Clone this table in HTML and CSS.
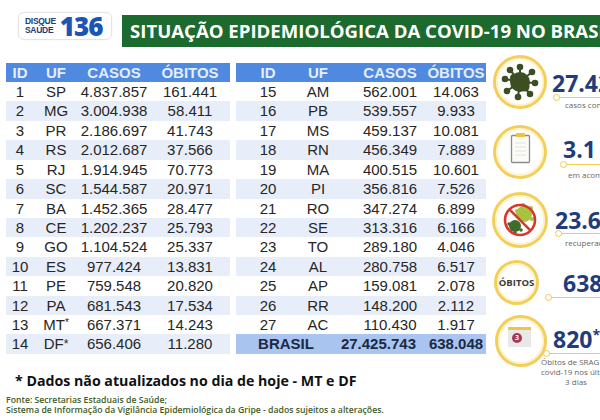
FILE: index.html
```html
<!DOCTYPE html>
<html lang="pt-BR">
<head>
<meta charset="utf-8">
<title>Situação epidemiológica da COVID-19 no Brasil</title>
<link rel="stylesheet" href="styles.css">
</head>
<body>
<div class="page">
  <header class="top">
    <div class="logo">
      <div class="logo-words"><span>DISQUE</span><span>SAÚDE</span></div>
      <div class="logo-num">136</div>
    </div>
    <h1 class="banner">SITUAÇÃO EPIDEMIOLÓGICA DA COVID-19 NO BRASIL</h1>
  </header>

  <main class="content">
    <section class="left">
      <div class="tables">
        <div class="tbl tbl-a">
          <div class="row head"><span>ID</span><span>UF</span><span>CASOS</span><span>ÓBITOS</span></div>
          <div class="row"><span>1</span><span>SP</span><span>4.837.857</span><span>161.441</span></div>
          <div class="row"><span>2</span><span>MG</span><span>3.004.938</span><span>58.411</span></div>
          <div class="row"><span>3</span><span>PR</span><span>2.186.697</span><span>41.743</span></div>
          <div class="row"><span>4</span><span>RS</span><span>2.012.687</span><span>37.566</span></div>
          <div class="row"><span>5</span><span>RJ</span><span>1.914.945</span><span>70.773</span></div>
          <div class="row"><span>6</span><span>SC</span><span>1.544.587</span><span>20.971</span></div>
          <div class="row"><span>7</span><span>BA</span><span>1.452.365</span><span>28.477</span></div>
          <div class="row"><span>8</span><span>CE</span><span>1.202.237</span><span>25.793</span></div>
          <div class="row"><span>9</span><span>GO</span><span>1.104.524</span><span>25.337</span></div>
          <div class="row"><span>10</span><span>ES</span><span>977.424</span><span>13.831</span></div>
          <div class="row"><span>11</span><span>PE</span><span>759.548</span><span>20.820</span></div>
          <div class="row"><span>12</span><span>PA</span><span>681.543</span><span>17.534</span></div>
          <div class="row"><span>13</span><span>MT<sup class="ast">*</sup></span><span>667.371</span><span>14.243</span></div>
          <div class="row"><span>14</span><span>DF<span class="ast2">*</span></span><span>656.406</span><span>11.280</span></div>
        </div>
        <div class="tbl tbl-b">
          <div class="row head"><span>ID</span><span class="uf">UF</span><span>CASOS</span><span>ÓBITOS</span></div>
          <div class="row"><span>15</span><span class="uf">AM</span><span>562.001</span><span>14.063</span></div>
          <div class="row"><span>16</span><span class="uf">PB</span><span>539.557</span><span>9.933</span></div>
          <div class="row"><span>17</span><span class="uf">MS</span><span>459.137</span><span>10.081</span></div>
          <div class="row"><span>18</span><span class="uf">RN</span><span>456.349</span><span>7.889</span></div>
          <div class="row"><span>19</span><span class="uf">MA</span><span>400.515</span><span>10.601</span></div>
          <div class="row"><span>20</span><span class="uf">PI</span><span>356.816</span><span>7.526</span></div>
          <div class="row"><span>21</span><span class="uf">RO</span><span>347.274</span><span>6.899</span></div>
          <div class="row"><span>22</span><span class="uf">SE</span><span>313.316</span><span>6.166</span></div>
          <div class="row"><span>23</span><span class="uf">TO</span><span>289.180</span><span>4.046</span></div>
          <div class="row"><span>24</span><span class="uf">AL</span><span>280.758</span><span>6.517</span></div>
          <div class="row"><span>25</span><span class="uf">AP</span><span>159.081</span><span>2.078</span></div>
          <div class="row"><span>26</span><span class="uf">RR</span><span>148.200</span><span>2.112</span></div>
          <div class="row"><span>27</span><span class="uf">AC</span><span>110.430</span><span>1.917</span></div>
          <div class="row total"><span class="br">BRASIL</span><span class="tc">27.425.743</span><span class="to">638.048</span></div>
        </div>
      </div>
      <p class="note">* Dados não atualizados no dia de hoje - MT e DF</p>
      <p class="source"><span class="src-line">Fonte: Secretarias Estaduais de Saúde;</span><span class="src-line">Sistema de Informação da Vigilância Epidemiológica da Gripe - dados sujeitos a alterações.</span></p>
    </section>

    <aside class="stats">
      <div class="stat s1">
        <div class="ring">
          <svg viewBox="0 0 48 48" width="48" height="48">
            <g stroke="#3c4f22" stroke-width="2" fill="#3c4f22">
              <line x1="24" y1="24" x2="24" y2="9"/>
              <line x1="24" y1="24" x2="36" y2="14"/>
              <line x1="24" y1="24" x2="39" y2="25"/>
              <line x1="24" y1="24" x2="34" y2="36"/>
              <line x1="24" y1="24" x2="22" y2="39"/>
              <line x1="24" y1="24" x2="11" y2="33"/>
              <line x1="24" y1="24" x2="9" y2="21"/>
              <line x1="24" y1="24" x2="14" y2="12"/>
              <circle cx="24" cy="9" r="2.3"/>
              <circle cx="36" cy="14" r="2.3"/>
              <circle cx="39" cy="25" r="2.3"/>
              <circle cx="34" cy="36" r="2.3"/>
              <circle cx="22" cy="39" r="2.3"/>
              <circle cx="11" cy="33" r="2.3"/>
              <circle cx="9" cy="21" r="2.3"/>
              <circle cx="14" cy="12" r="2.3"/>
            </g>
            <circle cx="24" cy="24" r="10" fill="#3c4f22"/>
            <circle cx="18" cy="20" r="4" fill="#3c4f22"/>
            <circle cx="29" cy="29" r="4.5" fill="#3c4f22"/>
          </svg>
        </div>
        <div class="body">
          <div class="num">27.425.743</div>
          <div class="rule"></div>
          <div class="cap">casos confirmados</div>
        </div>
      </div>

      <div class="stat s2">
        <div class="ring">
          <svg viewBox="0 0 48 48" width="48" height="48">
            <rect x="15.5" y="7.5" width="18" height="27" rx="1" fill="#fbfbf8" stroke="#8c8c8c" stroke-width="1.3"/>
            <rect x="20" y="5" width="9" height="4" rx="1" fill="#f0c23c"/>
            <g stroke="#e2e2e2" stroke-width="1">
              <line x1="19" y1="15" x2="30" y2="15"/>
              <line x1="19" y1="19" x2="30" y2="19"/>
              <line x1="19" y1="23" x2="30" y2="23"/>
              <line x1="19" y1="27" x2="30" y2="27"/>
            </g>
          </svg>
        </div>
        <div class="body">
          <div class="num">3.1</div>
          <div class="rule"></div>
          <div class="cap">em acompanhamento</div>
        </div>
      </div>

      <div class="stat s3">
        <div class="ring">
          <svg viewBox="0 0 50 50" width="50" height="50">
            <circle cx="29" cy="19" r="8" fill="#a7c43e"/>
            <circle cx="22" cy="16" r="2" fill="#a7c43e"/>
            <circle cx="36" cy="13" r="2" fill="#a7c43e"/>
            <circle cx="37" cy="24" r="2" fill="#a7c43e"/>
            <circle cx="28" cy="10" r="2" fill="#a7c43e"/>
            <circle cx="20" cy="31" r="6" fill="#3f6b2b"/>
            <circle cx="14" cy="29" r="1.8" fill="#3f6b2b"/>
            <circle cx="26" cy="35" r="1.8" fill="#3f6b2b"/>
            <circle cx="20" cy="38" r="1.8" fill="#3f6b2b"/>
            <circle cx="25" cy="25" r="15" fill="none" stroke="#d6392b" stroke-width="2.6"/>
            <line x1="14.4" y1="14.4" x2="35.6" y2="35.6" stroke="#d6392b" stroke-width="2.6"/>
          </svg>
        </div>
        <div class="body">
          <div class="num">23.6</div>
          <div class="rule"></div>
          <div class="cap">recuperados</div>
        </div>
      </div>

      <div class="stat s4">
        <div class="ring"><span class="ring-word">ÓBITOS</span></div>
        <div class="body">
          <div class="num">638.048</div>
          <div class="rule"></div>
        </div>
      </div>

      <div class="stat s5">
        <div class="ring">
          <svg viewBox="0 0 46 46" width="46" height="46">
            <rect x="10" y="9" width="23" height="20" fill="#e8e8e6"/>
            <rect x="10" y="9" width="23" height="3" fill="#f0c24a"/>
            <circle cx="19" cy="20" r="5" fill="#a8365e"/>
            <text x="19" y="22.3" text-anchor="middle" class="cal-num">3</text>
          </svg>
        </div>
        <div class="body">
          <div class="num">820<sup class="num-ast">*</sup></div>
          <div class="rule"></div>
          <div class="cap">Óbitos de SRAG por<br>covid-19 nos últimos<br>3 dias</div>
        </div>
      </div>
    </aside>
  </main>
</div>
</body>
</html>
```
FILE: styles.css
```css
html, body {
  margin: 0;
  padding: 0;
  background: #ffffff;
}
body {
  width: 600px;
  height: 420px;
  overflow: hidden;
  font-family: "Liberation Sans", Arial, sans-serif;
  color: #262626;
}
.page {
  width: 600px;
  height: 420px;
  overflow: hidden;
}

/* header */
.top {
  display: flex;
  align-items: flex-start;
  padding: 12px 0 0 18px;
  height: 35px;
}
.logo {
  box-sizing: border-box;
  width: 94px;
  height: 28px;
  border: 1px solid #e4e4e4;
  border-radius: 6px;
  box-shadow: 0 0 2px rgba(0,0,0,0.08);
  display: flex;
  align-items: center;
  padding-left: 6px;
  gap: 4px;
}
.logo-words {
  display: flex;
  flex-direction: column;
  font-weight: 700;
  font-size: 8.5px;
  line-height: 9px;
  color: #1e3c74;
  letter-spacing: -0.3px;
}
.logo-num {
  font-family: "Open Sans", "Liberation Sans", sans-serif;
  font-weight: 800;
  font-size: 26px;
  line-height: 26px;
  color: #1c55b5;
  letter-spacing: -1px;
}
.banner {
  flex: 1;
  margin: 3px 0 0 10px;
  height: 32px;
  background: #1c6a2d;
  color: #ffffff;
  font-family: "Open Sans", "Noto Sans", sans-serif;
  font-weight: 700;
  font-size: 18.6px;
  line-height: 32px;
  padding-left: 8px;
  white-space: nowrap;
  overflow: hidden;
}

/* content */
.content {
  display: flex;
  align-items: flex-start;
}
.left {
  width: 480px;
  padding-left: 6px;
  flex: none;
}
.tables {
  display: flex;
  gap: 6px;
  margin-top: 16px;
}
.tbl {
  display: flex;
  flex-direction: column;
}
.tbl-a { width: 224px; }
.tbl-b { width: 250px; }
.row {
  display: grid;
  height: 19.43px;
  font-size: 15px;
  line-height: 19.43px;
  text-align: center;
  white-space: nowrap;
}
.tbl-a .row { grid-template-columns: 28px 44px 72px 80px; }
.tbl-b .row { grid-template-columns: 64px 54px 72px 60px; }
.uf { padding-right: 18px; }
.row:nth-child(odd) { background: #e8eef9; }
.row.head {
  height: 19px;
  line-height: 19px;
  background: #4f89e0;
  color: #e4edfc;
  font-weight: 700;
}
.ast {
  font-size: 10px;
  vertical-align: 4px;
  line-height: 0;
}
.ast2 {
  font-size: 12px;
  position: relative;
  top: -1px;
}
.tbl-b .row.total {
  background: #a9c5ef;
  color: #1b2a44;
  font-weight: 700;
  grid-template-columns: 100px 90px 60px;
}
.tc { text-align: right; padding-right: 10px; }
.to { text-align: center; }

.note {
  margin: 17px 0 0 9px;
  font-family: "Open Sans", "Noto Sans", sans-serif;
  font-weight: 700;
  font-size: 14.2px;
  line-height: 20px;
  color: #111111;
  white-space: nowrap;
}
.source {
  margin: 4px 0 0 0;
  font-family: "Open Sans", "Noto Sans", sans-serif;
  font-weight: 600;
  font-size: 8.7px;
  color: #3f5b1e;
  white-space: nowrap;
}
.src-line {
  display: block;
  height: 10.5px;
  line-height: 10.5px;
}

/* stats */
.stats {
  flex: 1;
  min-width: 0;
  padding-top: 8px;
  margin-left: 6px;
  overflow: hidden;
}
.stat {
  display: flex;
  align-items: flex-start;
}
.ring {
  flex: none;
  box-sizing: border-box;
  border-radius: 50%;
  border: 3px solid #f3cf5a;
  box-shadow: inset 0 0 0 2px #fdf3cf;
  background: #ffffff;
  display: flex;
  align-items: center;
  justify-content: center;
}
.ring svg { display: block; }
.body {
  flex: 1;
  min-width: 0;
  white-space: nowrap;
}
.num {
  font-family: "Open Sans", "Noto Sans", sans-serif;
  font-weight: 700;
  font-size: 23px;
  line-height: 24px;
  color: #1f3d7a;
}
.num-ast {
  font-size: 14px;
  line-height: 0;
  vertical-align: 8px;
}
.rule {
  position: relative;
  height: 7px;
  width: 120px;
}
.rule::before {
  content: "";
  position: absolute;
  left: 3px;
  right: 0;
  top: 2.75px;
  height: 1.5px;
  background: #f0c94e;
}
.rule::after {
  content: "";
  position: absolute;
  left: 0;
  top: 0;
  box-sizing: border-box;
  width: 7px;
  height: 7px;
  border-radius: 50%;
  border: 1.5px solid #f0c94e;
  background: #ffffff;
}
.cap {
  font-family: "Open Sans", "Noto Sans", sans-serif;
  font-size: 8px;
  line-height: 10px;
  color: #666666;
}
.ring-word {
  font-family: "Open Sans", "Noto Sans", sans-serif;
  font-weight: 700;
  font-size: 9.5px;
  color: #3a3a3a;
}
.cal-num {
  font-family: "Open Sans", "Noto Sans", sans-serif;
  font-size: 7px;
  font-weight: 700;
  fill: #ffffff;
}

.s1 { height: 70px; }
.s1 .ring { width: 54px; height: 54px; margin-left: 1px; }
.s1 .body { margin-left: 5px; padding-top: 16px; }
.s1 .rule { margin-top: -1px; margin-left: 1px; }
.s1 .cap { margin-top: -1px; padding-left: 13px; }

.s2 { height: 67px; }
.s2 .ring { width: 54px; height: 54px; margin-left: 1px; }
.s2 .body { margin-left: 5px; padding-top: 12px; }
.s2 .num { padding-left: 11px; }
.s2 .rule { margin-top: 0; margin-left: 8px; }
.s2 .cap { margin-top: 2px; padding-left: 16px; }

.s3 { height: 68px; }
.s3 .ring { width: 56px; height: 56px; }
.s3 .body { margin-left: 4px; padding-top: 16px; }
.s3 .num { padding-left: 3px; }
.s3 .rule { margin-top: -2px; margin-left: 3px; }
.s3 .cap { margin-top: 1px; padding-left: 13px; }

.s4 { height: 55px; }
.s4 .ring { width: 45px; height: 45px; margin-left: 2px; }
.s4 .body { margin-left: 6px; padding-top: 11px; }
.s4 .num { padding-left: 18px; }
.s4 .rule { margin-top: -1px; }

.s5 .ring { width: 52px; height: 52px; margin-left: 3px; }
.s5 .body { margin-left: -4px; padding-top: 12px; }
.s5 .num { padding-left: 10px; }
.s5 .rule { margin-top: -1px; }
.s5 .cap { width: 70px; text-align: center; margin-left: -2px; }
```
